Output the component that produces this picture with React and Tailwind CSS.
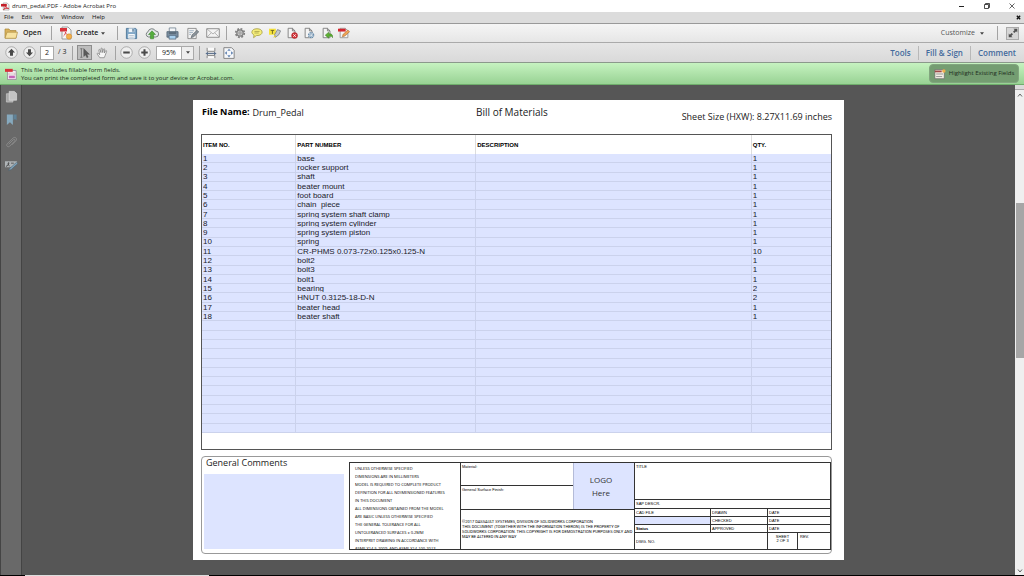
import React from 'react';
import classnames from 'clsx';

const menuItems = ['File', 'Edit', 'View', 'Window', 'Help'];

const parts = [
  ['1', 'base', '', '1'],
  ['2', 'rocker support', '', '1'],
  ['3', 'shaft', '', '1'],
  ['4', 'beater mount', '', '1'],
  ['5', 'foot board', '', '1'],
  ['6', 'chain  piece', '', '1'],
  ['7', 'spring system shaft clamp', '', '1'],
  ['8', 'spring system cylinder', '', '1'],
  ['9', 'spring system piston', '', '1'],
  ['10', 'spring', '', '1'],
  ['11', 'CR-PHMS 0.073-72x0.125x0.125-N', '', '10'],
  ['12', 'bolt2', '', '1'],
  ['13', 'bolt3', '', '1'],
  ['14', 'bolt1', '', '1'],
  ['15', 'bearing', '', '2'],
  ['16', 'HNUT 0.3125-18-D-N', '', '2'],
  ['17', 'beater head', '', '1'],
  ['18', 'beater shaft', '', '1'],
];

const totalRows = 30;
const rows = parts.concat(
  Array.from({ length: totalRows - parts.length }, () => ['', '', '', ''])
);

const columns = [
  { label: 'ITEM NO.', width: 'w-[15%]' },
  { label: 'PART NUMBER', width: 'w-[28.6%]' },
  { label: 'DESCRIPTION', width: 'w-[43.8%]' },
  { label: 'QTY.', width: 'w-[12.6%]' },
];

const notes = [
  'UNLESS OTHERWISE SPECIFIED',
  'DIMENSIONS ARE IN MILLIMETERS',
  'MODEL IS REQUIRED TO COMPLETE PRODUCT',
  'DEFINITION FOR ALL NDIMENSIONED FEATURES',
  'IN THIS DOCUMENT',
  'ALL DIMENSIONS OBTAINED FROM THE MODEL',
  'ARE BASIC UNLESS OTHERWISE SPECIFIED',
  'THE GENERAL TOLERANCE FOR ALL',
  'UNTOLERANCED SURFACES ± 0.2MM',
  'INTERPRET DRAWING IN ACCORDANCE WITH',
  'ASME Y14.5-2009, AND ASME Y14.100-2013',
];

const copyright = [
  '©2017 DASSAULT SYSTEMES, DIVISION OF SOLIDWORKS CORPORATION',
  'THIS DOCUMENT (TOGETHER WITH THE INFORMATION THERON) IS THE PROPERTY OF',
  'SOLIDWORKS CORPORATION. THIS COPYRIGHT IS FOR DEMOSTRATION PURPOSES ONLY AND',
  'MAY BE ALTERED IN ANY WAY',
];

const page = (
  <path d="M2.5 1.5h5l3 3v8h-8z M7.5 1.5v3h3" fill="#f4f4f4" stroke="#777" />
);

const icons = {
  acrobat: (
    <>
      <path d="M3.5 1.5h6l3 3v8h-9z" fill="#f6f6f6" stroke="#999" />
      <path d="M0 3h9v4H0z" fill="#c4202a" />
      <path
        d="M4 12c2-2 3-5 3-8 0 4 2 6 5 6-3-.6-6 0-8 2z"
        fill="none"
        stroke="#c4202a"
        strokeWidth="1.3"
      />
    </>
  ),
  folder: (
    <>
      <path d="M1 3h4l1 1.5h6V12H1z" fill="#d9b25c" stroke="#a98638" strokeWidth=".7" />
      <path d="M3 6.2h10.5L12 12.3H1z" fill="#f7e2a0" stroke="#b08f45" strokeWidth=".7" />
    </>
  ),
  create: (
    <>
      <path d="M3 1h6l3 3v9H3z" fill="#f7f7f7" stroke="#888" strokeWidth=".8" />
      <path d="M1 2h7v3.5H1z" fill="#d8323a" />
      <path d="M4.5 10c1.5-1 2-3 2-4 .3 2 1.5 3 3.5 3" fill="none" stroke="#d8323a" strokeWidth=".8" />
      <circle cx="10" cy="10.5" r="2.7" fill="#f3b04a" stroke="#cf8423" strokeWidth=".5" />
    </>
  ),
  save: (
    <>
      <path d="M1.5 1.5h10l1 1v10h-11z" fill="#7fa6c6" stroke="#4f7899" />
      <path d="M4 1.5h6v4H4z" fill="#eef4f8" />
      <path d="M8 2h1.3v3H8z" fill="#3f688b" />
      <path d="M3.5 7.5h7v5h-7z" fill="#f5f8fa" />
      <path d="M4.5 9.2h5M4.5 11h5" stroke="#9ab" strokeWidth=".7" />
    </>
  ),
  cloud: (
    <>
      <path
        d="M3.5 11A2.7 2.7 0 0 1 3 5.8 4 4 0 0 1 10.5 5 3 3 0 0 1 10.8 11z"
        fill="#e3e7e7"
        stroke="#6f7777"
        strokeWidth=".9"
      />
      <path d="M7 4.8l3.5 3.7H8.6v4.3H5.4V8.5H3.5z" fill="#54ad3c" stroke="#337d25" strokeWidth=".5" />
    </>
  ),
  print: (
    <>
      <path d="M3.5 1h7v5h-7z" fill="#f4f6f8" stroke="#68798a" strokeWidth=".8" />
      <path d="M1 5h12v6H1z" fill="#7d90a2" stroke="#4d5e6f" strokeWidth=".8" />
      <path d="M3 6.5h8" stroke="#3c4b59" />
      <path d="M3.3 9h7.4v4H3.3z" fill="#a9d0ee" stroke="#4f6478" strokeWidth=".8" />
    </>
  ),
  edit: (
    <>
      <path d="M2 1.5h9v11H2z" fill="#f2f2f2" stroke="#777" strokeWidth=".8" />
      <path d="M3.5 4h5M3.5 6h4M3.5 8h2" stroke="#8aa1b5" strokeWidth=".8" />
      <path d="M5.5 11.5l1-3 5.5-5 1.7 1.8-5.4 5.2z" fill="#8b949b" stroke="#4d555c" strokeWidth=".6" />
    </>
  ),
  mail: (
    <>
      <path d="M.7 2.7h12.6v8.6H.7z" fill="#f3f3f3" stroke="#888" strokeWidth=".9" />
      <path d="M1 3l6 5 6-5M1 11l4.3-4.2M13 11L8.7 6.8" fill="none" stroke="#a5a5a5" strokeWidth=".8" />
    </>
  ),
  gear: (
    <>
      <circle cx="7" cy="7" r="5" fill="none" stroke="#808080" strokeWidth="2" strokeDasharray="2.2 1.727" />
      <circle cx="7" cy="7" r="3.7" fill="#c9c9c9" stroke="#808080" strokeWidth="1.5" />
      <circle cx="7" cy="7" r="1.3" fill="#eee" stroke="#666" strokeWidth=".7" />
    </>
  ),
  bubble: (
    <>
      <path
        d="M7 2c3.6 0 6 1.700 6 4s-2.400 4-6 4h-.8L3 12.500l.6-3.200C2 8.500 1 7.400 1 6c0-2.300 2.400-4 6-4z"
        fill="#f6ee7a"
        stroke="#a19a3c"
        strokeWidth=".9"
      />
      <path d="M4 5.2h6M4 7h5" stroke="#9a9340" strokeWidth=".8" />
    </>
  ),
  highlight: (
    <>
      <path d="M0 2h8v7H0z" fill="#f5e23a" />
      <path d="M2 4h4M4 4v4" stroke="#665f20" />
      <path d="M6.5 9l3.5-6 3.5 1.5-2 4.5-4 3z" fill="#c5c9cd" stroke="#6d7276" strokeWidth=".8" />
      <path d="M5 12.5l1.7-3 1.8 1.7z" fill="#e3cf28" />
    </>
  ),
  docDelete: (
    <>
      {page}
      <circle cx="10" cy="10" r="3.5" fill="#cf2f35" stroke="#9b1c22" strokeWidth=".5" />
      <path d="M8.5 8.5l3 3M11.5 8.5l-3 3" stroke="#fff" />
    </>
  ),
  docGear: (
    <>
      {page}
      <circle cx="9.5" cy="9.5" r="3" fill="#dbe6ef" stroke="#6388a8" strokeWidth="1.4" strokeDasharray="1.6 .756" />
      <circle cx="9.5" cy="9.5" r="1.5" fill="#fff" stroke="#6388a8" strokeWidth=".8" />
    </>
  ),
  docExport: (
    <>
      {page}
      <path d="M5 9.5L9 6v2h1.5c2 0 3.300 1.500 3.300 4.500-.8-1.300-1.600-1.800-3-1.800H9V13z" fill="#5eb334" stroke="#36771c" strokeWidth=".6" />
    </>
  ),
  pdfPencil: (
    <>
      <path d="M2.5 1.5h6l3 3v8h-9z" fill="#f4f4f4" stroke="#888" strokeWidth=".9" />
      <path d="M0 2h9v3.3H0z" fill="#d4252d" />
      <path d="M5 11.5l1-3 5.5-5 2 2-5.5 5z" fill="#f0a457" stroke="#9c5f25" strokeWidth=".6" />
    </>
  ),
  up: (
    <>
      <circle cx="7" cy="7" r="6.2" fill="#efefef" stroke="#999" strokeWidth=".8" />
      <path d="M7 3l3.800 4H8.600v3.600H5.400V7H3.200z" fill="#4a4a4a" />
    </>
  ),
  down: (
    <>
      <circle cx="7" cy="7" r="6.2" fill="#efefef" stroke="#999" strokeWidth=".8" />
      <path d="M7 11l3.800-4H8.600V3.400H5.400V7H3.200z" fill="#4a4a4a" />
    </>
  ),
  cursor: (
    <>
      <path d="M1.5 2h2.6M1.5 12h2.6M2.8 2v10" stroke="#666" strokeWidth=".9" />
      <path d="M5.5 1.8v9.4l2.2-2 1.5 3.3 1.5-.7-1.5-3.2h3z" fill="#5b5b5b" stroke="#444" strokeWidth=".4" />
    </>
  ),
  hand: (
    <path
      d="M4.500 12.500L1.500 8.300c-.5-.9.6-1.600 1.300-.8L4.300 9 3.300 3.700c-.1-1 1.100-1.200 1.400-.3L5.800 6.500 5.900 2c.1-1 1.300-1 1.400 0l.4 4.400L8.800 2.600c.3-.9 1.500-.6 1.300.3L9.600 7l1.500-2.500c.6-.8 1.600-.2 1.300.6l-1.800 5-1 2.400z"
      fill="#f6f6f6"
      stroke="#777"
      strokeWidth=".8"
    />
  ),
  minus: (
    <>
      <circle cx="7" cy="7" r="6.2" fill="#efefef" stroke="#999" strokeWidth=".8" />
      <path d="M3.5 7h7" stroke="#4a4a4a" strokeWidth="2.2" />
    </>
  ),
  plus: (
    <>
      <circle cx="7" cy="7" r="6.2" fill="#efefef" stroke="#999" strokeWidth=".8" />
      <path d="M3.5 7h7M7 3.5v7" stroke="#4a4a4a" strokeWidth="2.2" />
    </>
  ),
  fitWidth: (
    <>
      <path d="M2.5 1v4h9V1M2.5 13v-3h9v3" fill="#fafafa" stroke="#777" />
      <path d="M3 7.5h8" stroke="#5a6f8c" strokeWidth="1.2" />
      <path d="M.5 7.5L3.5 5.500v4zM13.500 7.500l-3-2v4z" fill="#5a6f8c" />
    </>
  ),
  fitPage: (
    <>
      <path d="M1 .8h9l3 3v9.500H1z" fill="#f5f7fa" stroke="#777" />
      <path d="M7 2l2 2.500H5zM7 12.200l2-2.500H5zM2 7l2.600-2v4zM12 7L9.400 5v4z" fill="#6485b3" />
    </>
  ),
  expand: (
    <>
      <path d="M7.5 2H12v4.5L10.6 5.1 8.6 7 7 5.4l2-1.9z" fill="#4f4f4f" />
      <path d="M6.5 12H2V7.5l1.4 1.4L5.4 7 7 8.6l-2 1.9z" fill="#4f4f4f" />
    </>
  ),
  form: (
    <>
      <path d="M3 3h10v10.5H3z" fill="#faf6fa" stroke="#8d708d" strokeWidth=".8" />
      <path d="M0 1h9v3.5H0z" fill="#d8323a" />
      <path d="M4.5 6h7v2h-7z" fill="#fff" stroke="#a88" strokeWidth=".5" />
      <path d="M4.5 9h7v3h-7z" fill="#c665b8" />
    </>
  ),
  fields: (
    <>
      <path d="M1 2h11v10.5H1z" fill="#f4efe4" stroke="#666" strokeWidth=".8" />
      <path d="M1 3h8v2H1z" fill="#a04a48" />
      <path d="M2.5 7h8M2.5 10h7" stroke="#888" />
      <circle cx="11.5" cy="3.5" r="2" fill="#efb04a" />
    </>
  ),
  pages: (
    <>
      <path d="M1.5 4h7v9h-7z" fill="#a8a8a8" stroke="#ccc" strokeWidth=".7" />
      <path d="M4.5 1.5H10l2.5 2.3V11h-8z" fill="#c4c4c4" stroke="#e0e0e0" strokeWidth=".7" />
    </>
  ),
  bookmark: (
    <>
      <path d="M2 1.5h6.5V13L5.3 10 2 13z" fill="#86a9be" />
      <path d="M9 1.5h3.5V8L10.7 6.5 9 8z" fill="#5f8298" />
    </>
  ),
  clip: (
    <path
      d="M4 9l5-5c1.3-1 2.5.3 1.4 1.5L5 11c-1.8 1.6-4.3-.6-2.6-2.5L8.700 2.200c2.400-2 5 .8 3 3L7.500 9.500"
      fill="none"
      stroke="#8d8d8d"
    />
  ),
  sign: (
    <>
      <path d="M0 2.500h13v3L8 9H0z" fill="#aeb3b6" />
      <path d="M1 8c2-.5 3.5-3 3-4S2.500 7 5 7.500" fill="none" stroke="#444" />
      <path d="M6.500 4.500h3" stroke="#555" />
      <path d="M4 12.500l1-2.300L12.500 3.500l1.300 1.300-7 6.500z" fill="#7fa2ba" stroke="#4b5f6c" strokeWidth=".6" />
    </>
  ),
};

const Icon = ({ name, className = 'size-3.5' }) => (
  <svg viewBox="0 0 14 14" aria-hidden="true" className={classnames('shrink-0', className)}>
    {icons[name]}
  </svg>
);

const IconButton = ({ name, label, className, iconClassName }) => (
  <button
    type="button"
    aria-label={label}
    className={classnames('flex items-center justify-center', className)}
  >
    <Icon name={name} className={iconClassName} />
  </button>
);

const Caret = () => (
  <svg viewBox="0 0 6 4" aria-hidden="true" className="h-[3px] w-[4px] shrink-0">
    <path d="M0 0h6L3 4z" fill="#444" />
  </svg>
);

const Separator = ({ className = 'bg-[#a3a3a3]' }) => (
  <span className={classnames('h-3.5 w-px shrink-0', className)} />
);

const TitleBar = () => (
  <header className="flex h-3 shrink-0 items-center bg-white text-[6px] text-[#222]">
    <Icon name="acrobat" className="ml-px size-[9px]" />
    <h1 className="ml-[2px] flex-1">drum_pedal.PDF - Adobe Acrobat Pro</h1>
    <div className="flex w-[74px] text-[#222]">
      <button type="button" aria-label="Minimize" className="flex flex-1 justify-center">
        <svg viewBox="0 0 8 8" className="size-2">
          <path d="M1 4.5h5" stroke="currentColor" />
        </svg>
      </button>
      <button type="button" aria-label="Restore" className="flex flex-1 justify-center">
        <svg viewBox="0 0 8 8" className="size-2">
          <path d="M1.5 2.5h4v4h-4zM2.500 2.500v-1h4v4h-1" fill="none" stroke="currentColor" strokeWidth=".8" />
        </svg>
      </button>
      <button type="button" aria-label="Close" className="flex flex-1 justify-center">
        <svg viewBox="0 0 8 8" className="size-2">
          <path d="M1.500 1.500l5 5M6.500 1.500l-5 5" stroke="currentColor" strokeWidth=".7" />
        </svg>
      </button>
    </div>
  </header>
);

const MenuBar = () => (
  <nav className="flex h-[11px] shrink-0 items-center bg-[#dcdcdc] pr-[3px] pl-1 text-[6px] text-[#111]">
    <div className="flex flex-1 gap-[8px]">
      {menuItems.map(item => (
        <button key={item} type="button">
          {item}
        </button>
      ))}
    </div>
    <button type="button" aria-label="Close document">
      <svg viewBox="0 0 6 6" className="size-[5px]">
        <path d="M1 1l4 4M5 1L1 5" stroke="#111" strokeWidth="1.6" />
      </svg>
    </button>
  </nav>
);

const MainToolbar = () => (
  <div className="flex h-[19px] shrink-0 items-center border-t border-[#999] bg-linear-to-b from-[#f5f5f5] to-[#e6e6e6] pr-[5px] pl-1 text-[7px] text-[#222]">
    <button type="button" className="flex w-[47px] items-center gap-[5px] font-semibold">
      <Icon name="folder" />
      Open
    </button>
    <Separator />
    <button type="button" className="ml-[7px] flex w-[50px] items-center gap-[3px] font-semibold">
      <Icon name="create" />
      Create
      <Caret />
    </button>
    <Separator className="ml-[8px] bg-[#a3a3a3]" />
    <div className="ml-[3px] flex w-[102px]">
      <IconButton name="save" label="Save" className="flex-1" iconClassName="size-[13px]" />
      <IconButton name="cloud" label="Upload to Acrobat.com" className="flex-1" />
      <IconButton name="print" label="Print" className="flex-1" iconClassName="size-[13px]" />
      <IconButton name="edit" label="Edit document" className="flex-1" iconClassName="size-[13px]" />
      <IconButton name="mail" label="Email" className="flex-1" />
    </div>
    <Separator className="ml-[3px] bg-[#a3a3a3]" />
    <div className="ml-[4px] flex w-[122px]">
      <IconButton name="gear" label="Preferences" className="flex-1" iconClassName="size-3" />
      <IconButton name="bubble" label="Add note" className="flex-1" iconClassName="size-3" />
      <IconButton name="highlight" label="Highlight text" className="flex-1" iconClassName="size-3" />
      <IconButton name="docDelete" label="Delete page" className="flex-1" iconClassName="size-3" />
      <IconButton name="docGear" label="Page settings" className="flex-1" iconClassName="size-3" />
      <IconButton name="docExport" label="Extract page" className="flex-1" iconClassName="size-3" />
      <IconButton name="pdfPencil" label="Edit PDF" className="flex-1" iconClassName="size-3" />
    </div>
    <div className="flex-1" />
    <button type="button" className="flex items-center gap-[5px] text-[#555]">
      Customize
      <Caret />
    </button>
    <Separator className="mr-[8px] ml-[13px] bg-[#a3a3a3]" />
    <IconButton
      name="expand"
      label="Read mode"
      className="size-[13px] border border-[#aaa] bg-[#d6d6d6]"
      iconClassName="size-3"
    />
  </div>
);

const ViewToolbar = () => (
  <div className="flex h-5 shrink-0 items-center border-t border-[#aaa] bg-linear-to-b from-[#e6e6e6] to-[#d9d9d9] pr-2 pl-[5px] text-[7px] text-[#222]">
    <IconButton name="up" label="Previous page" iconClassName="size-[13px]" />
    <IconButton name="down" label="Next page" className="ml-[5px]" iconClassName="size-[13px]" />
    <input
      type="text"
      aria-label="Page number"
      defaultValue="2"
      className="ml-[4px] h-3.5 w-3.5 border border-[#aaa] bg-white text-center"
    />
    <span className="ml-[4px] w-[14px] whitespace-nowrap">/ 3</span>
    <Separator />
    <IconButton
      name="cursor"
      label="Select tool"
      className="ml-[4px] size-[15px] border border-[#8d8d8d] bg-[#bdbdbd]"
      iconClassName="size-3"
    />
    <IconButton name="hand" label="Hand tool" className="ml-[4px]" iconClassName="size-3" />
    <Separator className="ml-[7px] bg-[#a3a3a3]" />
    <IconButton name="minus" label="Zoom out" className="ml-[4px]" iconClassName="size-[13px]" />
    <IconButton name="plus" label="Zoom in" className="ml-[5px]" iconClassName="size-[13px]" />
    <div className="ml-[5px] flex h-3.5 w-[38px] border border-[#aaa] bg-white">
      <select
        aria-label="Zoom level"
        defaultValue="95%"
        className="min-w-0 flex-1 appearance-none text-center leading-3"
      >
        <option>50%</option>
        <option>95%</option>
        <option>100%</option>
      </select>
      <span className="pointer-events-none flex w-3 items-center justify-center border-l border-[#aaa] bg-[#eee]">
        <Caret />
      </span>
    </div>
    <Separator className="ml-[5px] bg-[#a3a3a3]" />
    <IconButton name="fitWidth" label="Fit width" className="ml-[5px]" iconClassName="size-3" />
    <IconButton name="fitPage" label="Fit page" className="ml-[6px]" iconClassName="size-3" />
    <div className="flex-1" />
    <div className="flex items-center gap-[7px] text-[8px] font-semibold text-[#446a9c]">
      <button type="button">Tools</button>
      <Separator className="bg-[#b8b8b8]" />
      <button type="button">Fill &amp; Sign</button>
      <Separator className="bg-[#b8b8b8]" />
      <button type="button">Comment</button>
    </div>
  </div>
);

const FormNotice = () => (
  <section className="flex h-[23px] shrink-0 items-center border-y border-t-[#8b998b] border-b-[#6fae6c] bg-linear-to-b from-[#c6f3c0] to-[#98d294] pr-[5px] pl-[5px] text-[6px] text-[#1c2b1c]">
    <Icon name="form" className="size-3" />
    <p className="ml-1 flex-1 leading-[8px]">
      This file includes fillable form fields.
      <br />
      You can print the completed form and save it to your device or Acrobat.com.
    </p>
    <button
      type="button"
      className="flex h-[19px] w-[90px] items-center justify-center gap-[3px] rounded-sm border border-[#82a57f] bg-[#749d71] whitespace-nowrap"
    >
      <Icon name="fields" className="size-3" />
      Highlight Existing Fields
    </button>
  </section>
);

const NavigationPane = () => (
  <aside className="flex w-[22px] shrink-0 flex-col items-center gap-[10px] border-r border-l border-[#444] bg-[#696969] pt-[5px]">
    <IconButton name="pages" label="Page thumbnails" iconClassName="size-[13px]" />
    <IconButton name="bookmark" label="Bookmarks" iconClassName="size-[13px]" />
    <IconButton name="clip" label="Attachments" iconClassName="size-[13px]" />
    <IconButton name="sign" label="Signatures" iconClassName="size-[13px]" />
  </aside>
);

const ScrollBar = () => (
  <div className="flex w-[9px] shrink-0 flex-col bg-[#efefef]">
    <div className="h-[5px] border-b border-[#aaa] bg-[#dadada]" />
    <button type="button" aria-label="Scroll up" className="flex h-[9px] items-center justify-center">
      <svg viewBox="0 0 6 4" className="h-[4px] w-[6px]">
        <path d="M1 3.5l2-2.5 2 2.5" fill="none" stroke="#666" />
      </svg>
    </button>
    <div className="flex-[104]" />
    <div className="ml-px flex-[155] bg-[#a6a6a6]" />
    <div className="flex-[208]" />
    <button type="button" aria-label="Scroll down" className="flex h-[9px] items-center justify-center">
      <svg viewBox="0 0 6 4" className="h-[4px] w-[6px]">
        <path d="M1 .5l2 2.5 2-2.5" fill="none" stroke="#666" />
      </svg>
    </button>
  </div>
);

const PartsTable = () => (
  <div className="border border-[#555] pb-4">
    <table className="h-[298px] w-full table-fixed border-separate border-spacing-0 font-['Liberation_Sans',sans-serif]">
      <thead>
        <tr className="h-[19px] text-left text-[6px] leading-[8px] text-black">
          {columns.map(({ label, width }) => (
            <th
              key={label}
              scope="col"
              className={classnames(
                'border-r border-[#ddd] p-0 pl-px align-middle font-bold last:border-r-0',
                width
              )}
            >
              {label}
            </th>
          ))}
        </tr>
      </thead>
      <tbody className="bg-[#dde4ff] text-[8px] leading-[8px] text-[#1a1a2a]">
        {rows.map((row, index) => (
          <tr key={index}>
            {row.map((value, column) => (
              <td
                key={columns[column].label}
                className="border-r border-b border-[#cbd2ec] p-0 pl-px align-bottom last:border-r-0"
              >
                <input
                  type="text"
                  aria-label={`${columns[column].label} row ${index + 1}`}
                  defaultValue={value}
                  className="block h-2 w-full"
                />
              </td>
            ))}
          </tr>
        ))}
      </tbody>
    </table>
  </div>
);

const SignOffRow = ({ first, second, highlighted }) => (
  <div className="flex h-2 border-b border-[#333]">
    <div
      className={classnames(
        'w-[76px] border-r border-[#333] pl-px',
        highlighted && 'bg-[#dde4ff]'
      )}
    >
      {first}
    </div>
    <div className="w-[57px] border-r border-[#333] pl-px">{second}</div>
    <div className="flex-1 pl-px">DATE</div>
  </div>
);

const TitleBlock = () => (
  <div className="flex flex-1 border border-l-0 border-[#333] font-['Liberation_Sans',sans-serif] text-[4px] leading-[7px] text-black">
    <div className="flex w-[174px] flex-col border-r border-[#333]">
      <div className="flex h-[47px] border-b border-[#333]">
        <div className="flex flex-1 flex-col">
          <div className="h-[23px] border-b border-[#333] pl-px">Material:</div>
          <div className="pl-px">General Surface Finish:</div>
        </div>
        <button
          type="button"
          className="w-[61px] border-l border-[#b4bbd8] bg-[#dde4ff] pr-[6px] font-['Open_Sans',sans-serif] text-[8px] leading-[13px] text-[#333]"
        >
          LOGO
          <br />
          Here
        </button>
      </div>
      <div className="flex-1 pt-[9px] pl-px font-['Roboto',sans-serif] leading-[5px] whitespace-nowrap">
        {copyright.map(line => (
          <p key={line}>{line}</p>
        ))}
      </div>
    </div>
    <div className="flex min-w-0 flex-1 flex-col">
      <div className="h-[37px] border-b border-[#333] pl-px">TITLE</div>
      <div className="h-[9px] border-b border-[#333] pl-px">SAP DESCR.</div>
      <SignOffRow first="CAD FILE" second="DRAWN" />
      <SignOffRow second="CHECKED" highlighted />
      <SignOffRow first={<b>Status</b>} second="APPROVED" />
      <div className="flex flex-1">
        <div className="flex w-[133px] items-center border-r border-[#333] pl-px">DWG. NO.</div>
        <div className="w-[30px] border-r border-[#333] pt-[2px] text-center leading-[4px]">
          SHEET
          <br />2 OF 3
        </div>
        <div className="flex-1 pl-[2px]">REV.</div>
      </div>
    </div>
  </div>
);

const Sheet = () => (
  <article className="mx-auto flex w-full max-w-[651px] flex-col bg-white pt-[6px] pr-3 pb-[6px] pl-2 text-[#222]">
    <div className="flex h-[28px] text-[9px] leading-[12px]">
      <p className="flex w-[275px] gap-[3px] pl-px">
        <b className="font-bold text-black">File Name:</b>
        <span className="pt-px">Drum_Pedal</span>
      </p>
      <h2 className="text-[10px]">Bill of Materials</h2>
      <p className="flex-1 pt-[5px] text-right">Sheet Size (HXW): 8.27X11.69 inches</p>
    </div>
    <PartsTable />
    <div className="mt-[6px] flex h-[98px] rounded border border-[#999]">
      <div className="flex w-[147px] flex-col pr-[5px] pb-1 pl-[2px]">
        <label htmlFor="comments" className="h-[17px] pl-[2px] text-[9px] leading-[12px]">
          General Comments
        </label>
        <textarea id="comments" className="block flex-1 resize-none bg-[#dde4ff]" />
      </div>
      <div className="mt-[5px] mb-[3px] flex flex-1">
        <div className="w-[112px] overflow-hidden border border-[#333] pt-[2px] pl-[5px] text-[4px] leading-[8px] whitespace-nowrap text-black">
          {notes.map(line => (
            <p key={line}>{line}</p>
          ))}
        </div>
        <TitleBlock />
      </div>
    </div>
  </article>
);

const App = () => (
  <div className="flex h-screen flex-col overflow-hidden bg-[#565656] font-['Open_Sans',sans-serif]">
    <TitleBar />
    <MenuBar />
    <MainToolbar />
    <ViewToolbar />
    <FormNotice />
    <div className="flex min-h-0 flex-1">
      <NavigationPane />
      <main className="min-w-0 flex-1 overflow-hidden pt-[15px]">
        <Sheet />
      </main>
      <ScrollBar />
    </div>
    <div className="flex h-px shrink-0 bg-black">
      <div className="ml-[25px] w-[184px] bg-[#ddd]" />
    </div>
  </div>
);

export default App;
